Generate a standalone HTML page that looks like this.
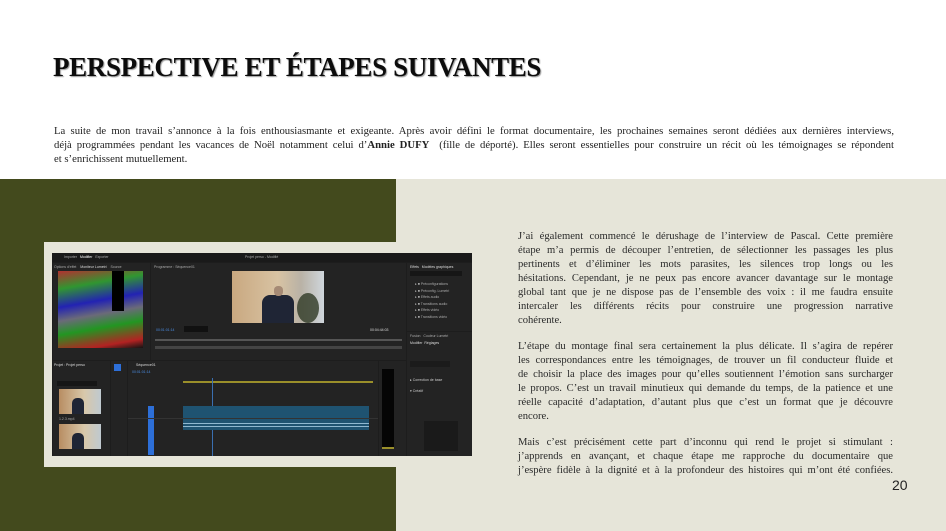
<!DOCTYPE html>
<html><head><meta charset="utf-8"><style>
*{margin:0;padding:0;box-sizing:border-box}
body{width:946px;height:531px;overflow:hidden;background:#fff;position:relative;font-family:"Liberation Serif",serif;color:#222}
.abs{position:absolute}
h1{position:absolute;left:53px;top:52px;font-size:27px;font-weight:bold;letter-spacing:-0.35px;color:#0c0c0c;text-shadow:1px 1px 1px #999;white-space:nowrap}
.p1{left:54px;top:124px;width:840px;font-size:10.7px;line-height:14px;color:#222}
.l{white-space:nowrap;text-align:justify;text-align-last:justify}
.l.e{text-align-last:left}
.olive{left:0;top:179px;width:396px;height:352px;background:#434a1d}
.beige{left:396px;top:179px;width:550px;height:352px;background:#e6e5d9}
.frame{left:44px;top:242px;width:436px;height:225px;background:#e6e5d9}
.ss{left:52px;top:253px;width:420px;height:203px;background:#1d1d1d;overflow:hidden;font-family:"Liberation Sans",sans-serif;font-size:3.5px;color:#aaa}
.pn{position:absolute;background:#232323}
.p2{left:518px;top:230px;width:375px;font-size:10.6px;line-height:14px;color:#2a2a2a}
.p2 .gap{height:12px}
.num{left:892px;top:477px;font-family:"Liberation Sans",sans-serif;font-size:14px;color:#222}
.t{position:absolute;white-space:nowrap}
</style></head><body>
<h1>PERSPECTIVE ET ÉTAPES SUIVANTES</h1>
<div class="abs p1">
<div class="l">La suite de mon travail s’annonce à la fois enthousiasmante et exigeante. Après avoir défini le format documentaire, les prochaines semaines seront dédiées aux dernières interviews,</div>
<div class="l">déjà programmées pendant les vacances de Noël notamment celui d’<b>Annie DUFY</b>&nbsp; (fille de déporté). Elles seront essentielles pour construire un récit où les témoignages se répondent</div>
<div class="l e">et s’enrichissent mutuellement.</div>
</div>
<div class="abs olive"></div>
<div class="abs beige"></div>
<div class="abs frame"></div>
<div class="abs ss">
 <div class="pn" style="left:0;top:0;width:420px;height:9px;background:#1a1a1a"></div>
 <div class="t" style="left:12px;top:2px">Importer&nbsp;&nbsp;&nbsp;<span style="color:#fff">Modifier</span>&nbsp;&nbsp;&nbsp;Exporter</div>
 <div class="t" style="left:193px;top:2px">Projet perso - Modifié</div>
 <div class="pn" style="left:1px;top:10px;width:97px;height:97px"></div>
 <div class="t" style="left:2px;top:12px">Options d'effet&nbsp;&nbsp;&nbsp;&nbsp;<span style="color:#ddd">Moniteur Lumetri</span>&nbsp;&nbsp;&nbsp;&nbsp;Source</div>
 <div class="pn" style="left:6px;top:18px;width:85px;height:77px;background:linear-gradient(170deg,#c33 0%,#3a3 20%,#22c 40%,#778 55%,#2a2 70%,#c22 90%,#111 100%);opacity:.85"></div>
 <div class="pn" style="left:60px;top:18px;width:12px;height:40px;background:#000"></div>
 <div class="pn" style="left:99px;top:10px;width:255px;height:97px"></div>
 <div class="t" style="left:102px;top:12px">Programme : Séquence01</div>
 <div class="pn" style="left:180px;top:18px;width:92px;height:52px;background:linear-gradient(90deg,#c9a880 0%,#d8c3a3 50%,#b9b2a6 75%,#cfd6dc 100%)"></div>
 <div class="pn" style="left:210px;top:42px;width:32px;height:28px;background:#1f2535;border-radius:8px 8px 0 0"></div>
 <div class="pn" style="left:222px;top:33px;width:9px;height:10px;background:#a58a75;border-radius:4px"></div>
 <div class="pn" style="left:245px;top:40px;width:22px;height:30px;background:#2f3a26;border-radius:50%;opacity:.8"></div>
 <div class="t" style="left:104px;top:75px;color:#4a8be0">00:01:01:14</div>
 <div class="pn" style="left:132px;top:73px;width:24px;height:6px;background:#111"></div>
 <div class="t" style="left:318px;top:75px;color:#ddd">00:04:44:03</div>
 <div class="pn" style="left:103px;top:86px;width:247px;height:2px;background:#555"></div>
 <div class="pn" style="left:103px;top:93px;width:247px;height:3px;background:#444"></div>
 <div class="pn" style="left:355px;top:10px;width:65px;height:68px"></div>
 <div class="t" style="left:358px;top:12px;color:#ddd">Effets&nbsp;&nbsp;&nbsp;Modèles graphiques</div>
 <div class="pn" style="left:358px;top:18px;width:52px;height:5px;background:#161616"></div>
 <div class="t" style="left:363px;top:28px;line-height:6.6px">▸ ■ Préconfigurations<br>▸ ■ Préconfig. Lumetri<br>▸ ■ Effets audio<br>▸ ■ Transitions audio<br>▸ ■ Effets vidéo<br>▸ ■ Transitions vidéo</div>
 <div class="pn" style="left:355px;top:79px;width:65px;height:124px"></div>
 <div class="t" style="left:358px;top:81px">Fusion&nbsp;&nbsp;&nbsp;Couleur Lumetri</div>
 <div class="t" style="left:358px;top:88px;color:#ddd">Modifier&nbsp;&nbsp;Réglages</div>
 <div class="pn" style="left:358px;top:108px;width:40px;height:6px;background:#1b1b1b"></div>
 <div class="t" style="left:358px;top:125px;color:#ccc">▸ Correction de base</div>
 <div class="t" style="left:358px;top:136px;color:#ccc">▾ Créatif</div>
 <div class="pn" style="left:372px;top:168px;width:34px;height:30px;background:#1a1a1a"></div>
 <div class="pn" style="left:1px;top:108px;width:57px;height:95px"></div>
 <div class="t" style="left:2px;top:110px;color:#ddd">Projet : Projet perso</div>
 <div class="pn" style="left:5px;top:128px;width:40px;height:5px;background:#161616"></div>
 <div class="pn" style="left:7px;top:136px;width:42px;height:25px;background:linear-gradient(90deg,#b88d62,#d8c8aa 60%,#bfc9d0)"></div>
 <div class="pn" style="left:20px;top:145px;width:12px;height:16px;background:#1f2535;border-radius:5px 5px 0 0"></div>
 <div class="t" style="left:7px;top:164px">1.2.3.mp4</div>
 <div class="pn" style="left:7px;top:171px;width:42px;height:25px;background:linear-gradient(90deg,#b88d62,#d8c8aa 60%,#bfc9d0)"></div>
 <div class="pn" style="left:20px;top:180px;width:12px;height:16px;background:#1f2535;border-radius:5px 5px 0 0"></div>
 <div class="pn" style="left:59px;top:108px;width:16px;height:95px"></div>
 <div class="pn" style="left:62px;top:111px;width:7px;height:7px;background:#2d6fd8"></div>
 <div class="pn" style="left:76px;top:108px;width:250px;height:95px"></div>
 <div class="t" style="left:84px;top:110px;color:#ddd">Séquence01</div>
 <div class="t" style="left:80px;top:117px;color:#4a8be0">00:01:01:14</div>
 <div class="pn" style="left:131px;top:128px;width:190px;height:2px;background:#9a8f2a"></div>
 <div class="pn" style="left:160px;top:125px;width:1px;height:78px;background:#3a6fb0"></div>
 <div class="pn" style="left:131px;top:153px;width:186px;height:12px;background:#1f5371"></div>
 <div class="pn" style="left:131px;top:166px;width:186px;height:11px;background:#1f5371"></div>
 <div class="pn" style="left:131px;top:170px;width:186px;height:1px;background:#8fb8d0"></div>
 <div class="pn" style="left:131px;top:173px;width:186px;height:1px;background:#8fb8d0"></div>
 <div class="pn" style="left:96px;top:153px;width:6px;height:12px;background:#2d6fd8"></div>
 <div class="pn" style="left:96px;top:166px;width:6px;height:36px;background:#2d6fd8"></div>
 <div class="pn" style="left:76px;top:165px;width:250px;height:1px;background:#333"></div>
 <div class="pn" style="left:327px;top:108px;width:27px;height:95px"></div>
 <div class="pn" style="left:330px;top:116px;width:12px;height:80px;background:#050505"></div>
 <div class="pn" style="left:330px;top:194px;width:12px;height:2px;background:#9a8f2a"></div>
</div>
<div class="abs p2">
<div class="l">J’ai également commencé le dérushage de l’interview de Pascal. Cette première</div>
<div class="l">étape m’a permis de découper l’entretien, de sélectionner les passages les plus</div>
<div class="l">pertinents et d’éliminer les mots parasites, les silences trop longs ou les</div>
<div class="l">hésitations. Cependant, je ne peux pas encore avancer davantage sur le montage</div>
<div class="l">global tant que je ne dispose pas de l’ensemble des voix : il me faudra ensuite</div>
<div class="l">intercaler les différents récits pour construire une progression narrative</div>
<div class="l e">cohérente.</div>
<div class="gap"></div>
<div class="l">L’étape du montage final sera certainement la plus délicate. Il s’agira de repérer</div>
<div class="l">les correspondances entre les témoignages, de trouver un fil conducteur fluide et</div>
<div class="l">de choisir la place des images pour qu’elles soutiennent l’émotion sans surcharger</div>
<div class="l">le propos. C’est un travail minutieux qui demande du temps, de la patience et une</div>
<div class="l">réelle capacité d’adaptation, d’autant plus que c’est un format que je découvre</div>
<div class="l e">encore.</div>
<div class="gap"></div>
<div class="l">Mais c’est précisément cette part d’inconnu qui rend le projet si stimulant :</div>
<div class="l">j’apprends en avançant, et chaque étape me rapproche du documentaire que</div>
<div class="l">j’espère fidèle à la dignité et à la profondeur des histoires qui m’ont été confiées.</div>
</div>
<div class="abs num">20</div>
</body></html>
